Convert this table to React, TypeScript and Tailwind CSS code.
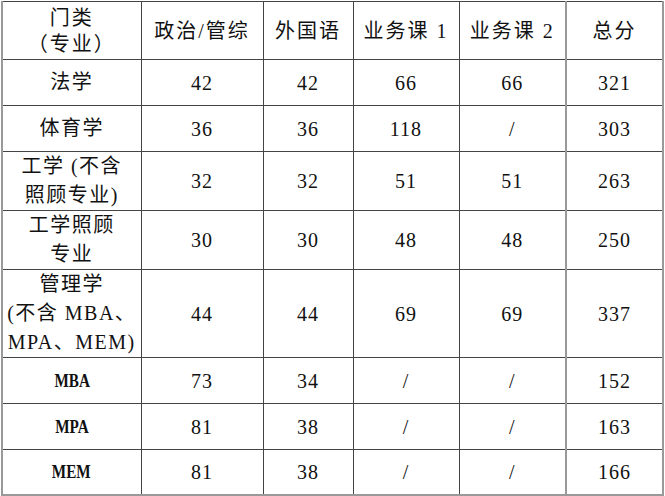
const Abbr = ({ t }: { t: string }) => (
  <span className="inline-block font-bold tracking-normal text-[19px] scale-x-[0.8]">{t}</span>
);

const rows: { name: React.ReactNode; cells: string[]; h: string }[] = [
  { name: "法学", cells: ["42", "42", "66", "66", "321"], h: "h-[46px]" },
  { name: "体育学", cells: ["36", "36", "118", "/", "303"], h: "h-[46px]" },
  {
    name: (
      <>
        工学 (不含
        <br />
        照顾专业)
      </>
    ),
    cells: ["32", "32", "51", "51", "263"],
    h: "h-[58px]",
  },
  {
    name: (
      <>
        工学照顾
        <br />
        专业
      </>
    ),
    cells: ["30", "30", "48", "48", "250"],
    h: "h-[58px]",
  },
  {
    name: (
      <>
        管理学
        <br />
        (不含 MBA、
        <br />
        MPA、MEM)
      </>
    ),
    cells: ["44", "44", "69", "69", "337"],
    h: "h-[88px]",
  },
  { name: <Abbr t="MBA" />, cells: ["73", "34", "/", "/", "152"], h: "h-[46px]" },
  { name: <Abbr t="MPA" />, cells: ["81", "38", "/", "/", "163"], h: "h-[46px]" },
  { name: <Abbr t="MEM" />, cells: ["81", "38", "/", "/", "166"], h: "h-[45px]" },
];

const headers = ["政治/管综", "外国语", "业务课 1", "业务课 2", "总分"];
const widths = ["w-[122px]", "w-[90px]", "w-[106px]", "w-[107px]", "w-[97px]"];

export default function App() {
  return (
    <div className="bg-white w-[665px] h-[496px] pt-[1px] pl-[1px]">
      <table
        className="table-fixed border-collapse text-[#111] border-l-2 border-r-2 border-b-2 border-[#999]"
        style={{ fontFamily: "'Liberation Serif', 'Noto Sans CJK SC', serif" }}
      >
        <thead>
          <tr className="h-[58px]">
            <th className="w-[139px] border border-[#444] border-l-2 border-l-[#999] font-normal text-[20px] leading-[26px] tracking-[2px] text-center">
              门类
              <br />
              （专业）
            </th>
            {headers.map((h, i) => (
              <th
                key={h}
                className={`${widths[i]} border border-[#444] font-normal text-[20px] tracking-[2px] text-center ${
                  i === 4 ? "border-l-2 border-l-[#999] border-r-2 border-r-[#999]" : ""
                }`}
              >
                {h}
              </th>
            ))}
          </tr>
        </thead>
        <tbody>
          {rows.map((r, ri) => (
            <tr key={ri} className={r.h}>
              <td className="border border-[#444] border-l-2 border-l-[#999] text-[20px] leading-[29px] tracking-[1.5px] text-center">
                {r.name}
              </td>
              {r.cells.map((c, i) => (
                <td
                  key={i}
                  className={`border border-[#444] text-[20px] tracking-[1px] text-center ${
                    i === 4 ? "border-l-2 border-l-[#999] border-r-2 border-r-[#999]" : ""
                  } ${ri === rows.length - 1 ? "border-b-2 border-b-[#999]" : ""}`}
                >
                  {c}
                </td>
              ))}
            </tr>
          ))}
        </tbody>
      </table>
    </div>
  );
}
